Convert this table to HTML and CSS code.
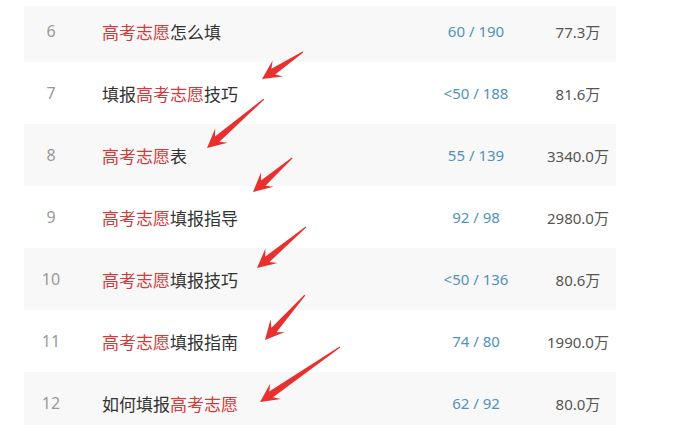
FILE: index.html
```html
<!DOCTYPE html>
<html lang="zh-CN">
<head>
  <meta charset="UTF-8">
  <title>高考志愿 关键词排名</title>
  <link rel="stylesheet" href="styles.css">
</head>
<body>
  <div class="page">
    <div class="rank-table">
      <div class="row gray first">
        <div class="num">6</div>
        <div class="kw"><span class="hl">高考志愿</span>怎么填</div>
        <div class="rank">60 / 190</div>
        <div class="vol">77.3万</div>
      </div>
      <div class="row">
        <div class="num">7</div>
        <div class="kw">填报<span class="hl">高考志愿</span>技巧</div>
        <div class="rank">&lt;50 / 188</div>
        <div class="vol">81.6万</div>
      </div>
      <div class="row gray">
        <div class="num">8</div>
        <div class="kw"><span class="hl">高考志愿</span>表</div>
        <div class="rank">55 / 139</div>
        <div class="vol">3340.0万</div>
      </div>
      <div class="row">
        <div class="num">9</div>
        <div class="kw"><span class="hl">高考志愿</span>填报指导</div>
        <div class="rank">92 / 98</div>
        <div class="vol">2980.0万</div>
      </div>
      <div class="row gray">
        <div class="num">10</div>
        <div class="kw"><span class="hl">高考志愿</span>填报技巧</div>
        <div class="rank">&lt;50 / 136</div>
        <div class="vol">80.6万</div>
      </div>
      <div class="row">
        <div class="num">11</div>
        <div class="kw"><span class="hl">高考志愿</span>填报指南</div>
        <div class="rank">74 / 80</div>
        <div class="vol">1990.0万</div>
      </div>
      <div class="row gray last">
        <div class="num">12</div>
        <div class="kw">如何填报<span class="hl">高考志愿</span></div>
        <div class="rank">62 / 92</div>
        <div class="vol">80.0万</div>
      </div>
    </div>

    <!-- 红色箭头标注 -->
    <svg class="arrows" width="675" height="432" viewBox="0 0 675 432">
      <g fill="#e8302e">
        <path transform="translate(262 79) rotate(146.6)" d="M0,0 L-19,-9.5 L-13.5,-3.4 L-49,-0.6 L-49,0.6 L-13.5,3.4 L-19,9.5 Z"/>
        <path transform="translate(207 148) rotate(139.3)" d="M0,0 L-19,-9.5 L-13.5,-3.4 L-75,-0.6 L-75,0.6 L-13.5,3.4 L-19,9.5 Z"/>
        <path transform="translate(253 192) rotate(139)" d="M0,0 L-19,-9.5 L-13.5,-3.4 L-52,-0.6 L-52,0.6 L-13.5,3.4 L-19,9.5 Z"/>
        <path transform="translate(257 268) rotate(140)" d="M0,0 L-19,-9.5 L-13.5,-3.4 L-64,-0.6 L-64,0.6 L-13.5,3.4 L-19,9.5 Z"/>
        <path transform="translate(265 340) rotate(131.6)" d="M0,0 L-19,-9.5 L-13.5,-3.4 L-60,-0.6 L-60,0.6 L-13.5,3.4 L-19,9.5 Z"/>
        <path transform="translate(260 402) rotate(145.5)" d="M0,0 L-19,-9.5 L-13.5,-3.4 L-97,-0.6 L-97,0.6 L-13.5,3.4 L-19,9.5 Z"/>
      </g>
    </svg>
  </div>
</body>
</html>
```

FILE: styles.css
```css
body {
  margin: 0;
  background-color: #fff;
  font-family: "Noto Sans", "Noto Sans CJK SC", sans-serif;
}
.page {
  position: relative;
  width: 675px;
  height: 432px;
  overflow: hidden;
}
.rank-table {
  width: 592px;
  margin-left: 24px;
}
.row {
  display: grid;
  grid-template-columns: 54px 1fr 128px 76px;
  align-items: center;
  height: 62px;
  box-sizing: border-box;
  background-color: #fff;
}
.row.gray {
  background-color: #f8f8f8;
}
.row.first {
  margin-top: 6px;
  height: 56px;
  padding-bottom: 6px;
}
.row.last {
  height: 53px;
  padding-top: 9px;
}
.num {
  text-align: center;
  color: #999;
  font-size: 16px;
}
.kw {
  padding-left: 24px;
  color: #333;
  font-size: 17px;
  font-family: "Noto Sans CJK SC", sans-serif;
}
.hl {
  color: #d23a3c;
}
.rank {
  text-align: center;
  color: #4f92bd;
  font-size: 15px;
}
.vol {
  text-align: center;
  color: #555;
  font-size: 15px;
}
.arrows {
  position: absolute;
  left: 0;
  top: 0;
  pointer-events: none;
}
```
